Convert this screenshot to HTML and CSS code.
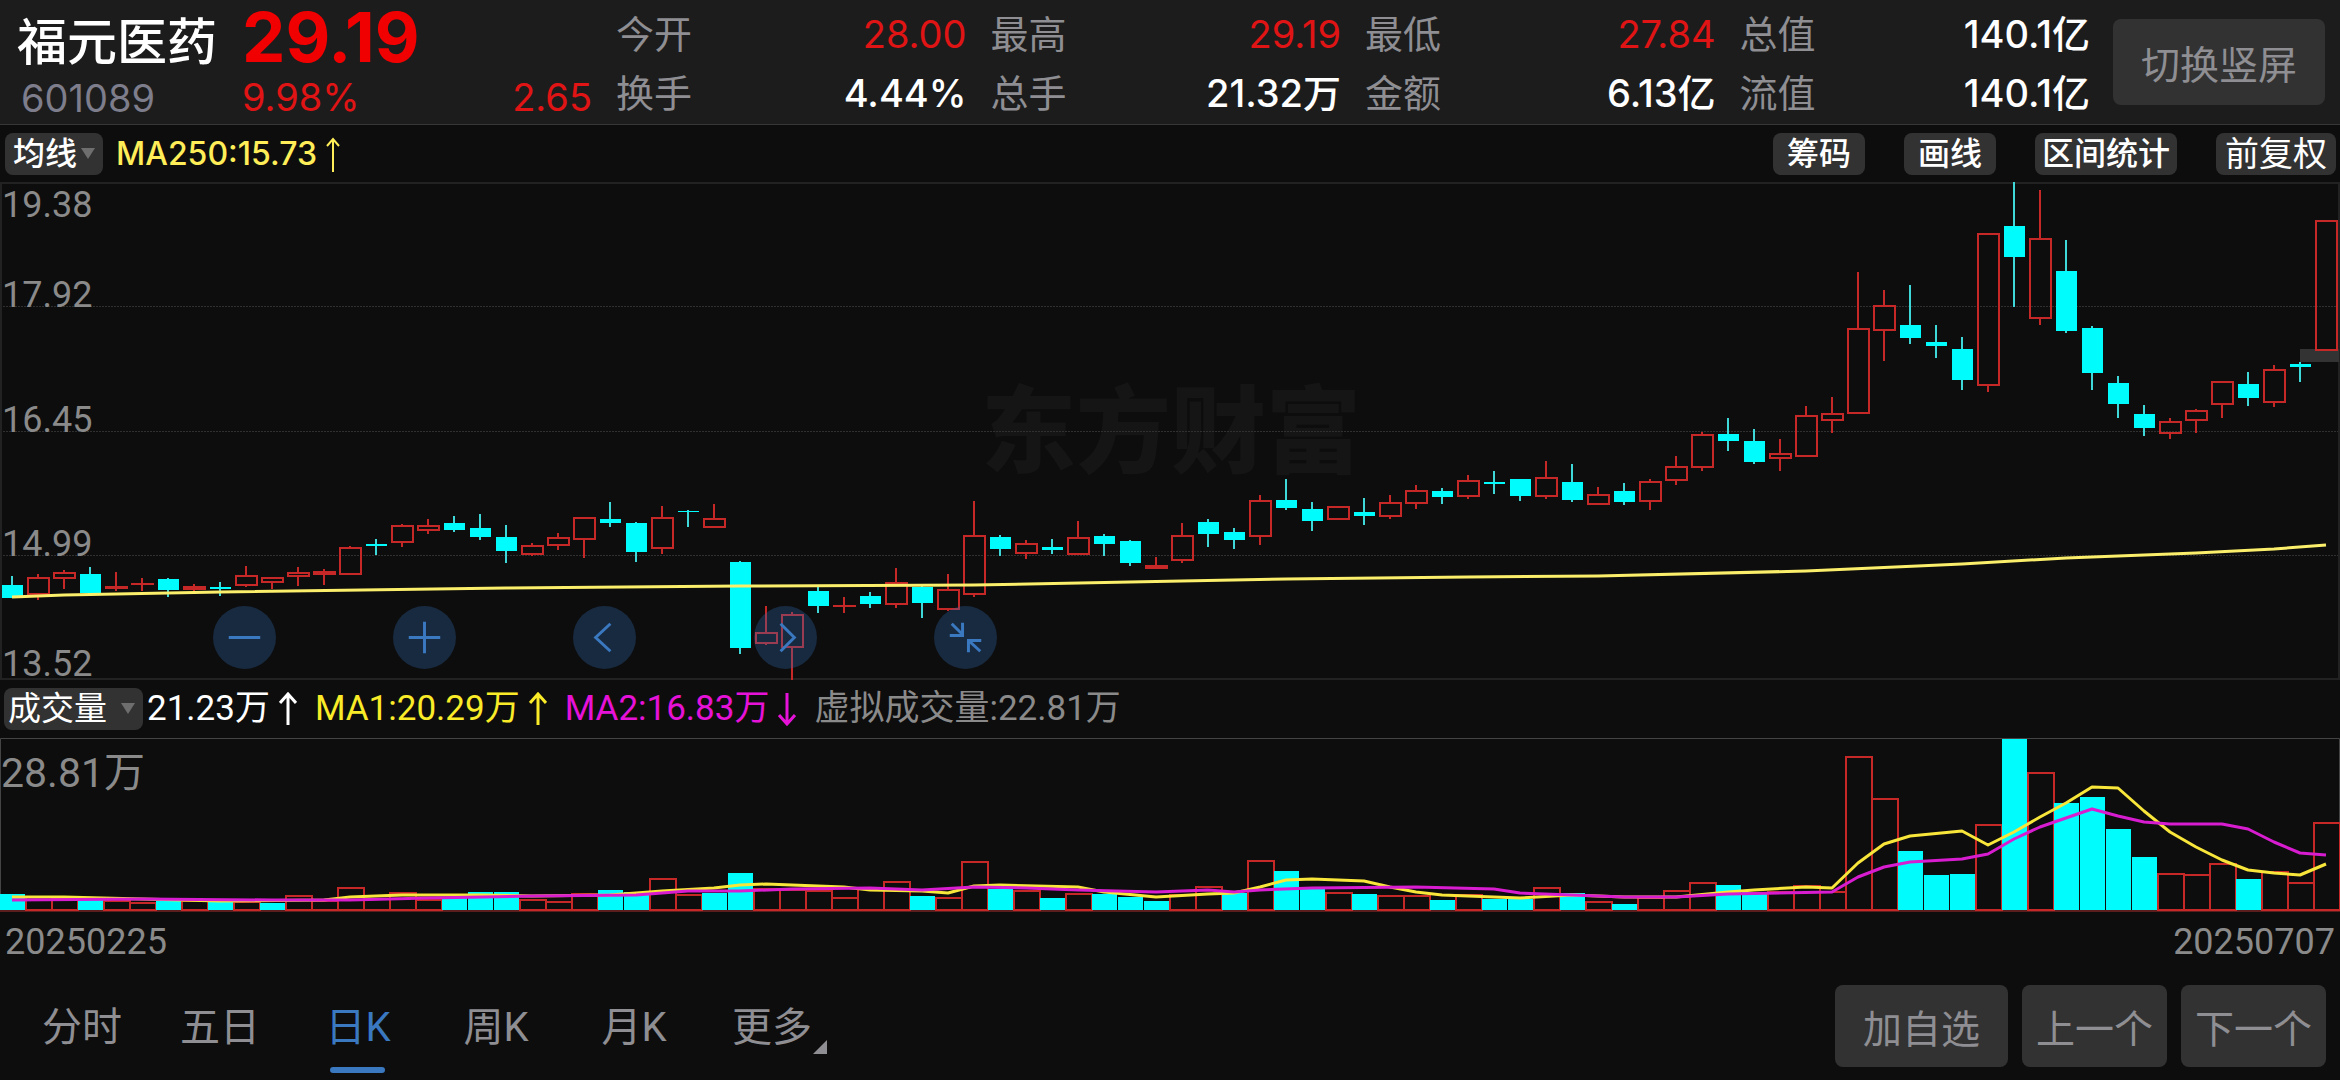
FILE: index.html
```
<!DOCTYPE html>
<html lang="zh-CN">
<head>
<meta charset="utf-8">
<meta name="viewport" content="width=device-width, initial-scale=1">
<title>福元医药 601089 日K</title>
<link rel="stylesheet" href="styles.css">
</head>
<body>
<header class="quote">
  <div class="stock">
    <h1 class="stock-name">福元医药</h1>
    <span class="stock-code">601089</span>
  </div>
  <div class="price">
    <strong class="price-last">29.19</strong>
    <div class="price-change"><span>9.98%</span><span>2.65</span></div>
  </div>
  <dl class="stats">
    <div class="stat"><dt>今开</dt><dd class="up">28.00</dd></div>
    <div class="stat"><dt>最高</dt><dd class="up">29.19</dd></div>
    <div class="stat"><dt>最低</dt><dd class="up">27.84</dd></div>
    <div class="stat"><dt>总值</dt><dd>140.1亿</dd></div>
    <div class="stat"><dt>换手</dt><dd>4.44%</dd></div>
    <div class="stat"><dt>总手</dt><dd>21.32万</dd></div>
    <div class="stat"><dt>金额</dt><dd>6.13亿</dd></div>
    <div class="stat"><dt>流值</dt><dd>140.1亿</dd></div>
  </dl>
  <button class="btn btn-rotate" type="button">切换竖屏</button>
</header>

<main>
  <div class="bar bar-price">
    <button class="chip chip-ma" type="button">均线<span class="caret"></span></button>
    <span class="ma250">MA250:15.73<svg class="arrow-up" viewBox="0 0 16 36" aria-hidden="true"><path d="M8 36V3M2 10L8 3l6 7"/></svg></span>
    <div class="tools">
      <button class="chip" type="button">筹码</button>
      <button class="chip" type="button">画线</button>
      <button class="chip" type="button">区间统计</button>
      <button class="chip chip-adjust" type="button">前复权</button>
    </div>
  </div>

  <section class="chart" aria-label="日K线">
    <svg id="candles" class="plot" viewBox="0 182 2340 498">
      <text class="watermark" x="981" y="466">东方财富</text>
      <path class="grid" d="M0 306.500H2340M0 431.500H2340M0 555.500H2340"/>
      <path class="frame" d="M1 183H2339V679H1z"/>
      <text class="axis" x="2" y="217">19.38</text>
      <text class="axis" x="2" y="307">17.92</text>
      <text class="axis" x="2" y="432">16.45</text>
      <text class="axis" x="2" y="556">14.99</text>
      <text class="axis" x="2" y="676">13.52</text>
      <rect class="gap" x="2300" y="349" width="39" height="13"/>
    </svg>
    <div class="controls">
      <button class="round" type="button" aria-label="缩小"><svg viewBox="0 0 64 64"><path d="M16 32H48"/></svg></button>
      <button class="round" type="button" aria-label="放大"><svg viewBox="0 0 64 64"><path d="M16 32H48M32 16V48"/></svg></button>
      <button class="round" type="button" aria-label="左移"><svg viewBox="0 0 64 64"><path d="M38 18L23 32L38 46"/></svg></button>
      <button class="round" type="button" aria-label="右移"><svg viewBox="0 0 64 64"><path d="M27 18L41 32L27 46"/></svg></button>
      <button class="round" type="button" aria-label="收起"><svg viewBox="0 0 64 64"><path d="M18 18L29 29M29 17V30H16M47 46L35 35M35 47V35H48"/></svg></button>
    </div>
  </section>

  <div class="bar bar-volume">
    <button class="chip chip-volume" type="button">成交量<span class="caret"></span></button>
    <span class="legend">21.23万<svg class="arrow" viewBox="0 0 18 34" aria-hidden="true"><path d="M9 33V2M1 11L9 2l8 9"/></svg></span>
    <span class="legend legend-ma1">MA1:20.29万<svg class="arrow" viewBox="0 0 18 34" aria-hidden="true"><path d="M9 33V2M1 11L9 2l8 9"/></svg></span>
    <span class="legend legend-ma2">MA2:16.83万<svg class="arrow" viewBox="0 0 18 34" aria-hidden="true"><path d="M9 1V32M1 23L9 32l8-9"/></svg></span>
    <span class="legend legend-virtual">虚拟成交量:22.81万</span>
  </div>

  <section aria-label="成交量">
    <svg id="volume" class="plot" viewBox="0 737 2340 175">
      <path class="frame frame-volume" d="M.5 911V737.500H2339.500V911"/>
      <path class="base" d="M0 910H2340"/>
      <text class="axis axis-volume" x="1" y="786">28.81万</text>
    </svg>
    <div class="dates"><time>20250225</time><time>20250707</time></div>
  </section>
</main>

<footer class="footer">
  <nav class="tabs">
    <a class="tab" href="#minute">分时</a>
    <a class="tab" href="#five">五日</a>
    <a class="tab tab-on" href="#day" aria-current="page">日K</a>
    <a class="tab" href="#week">周K</a>
    <a class="tab" href="#month">月K</a>
    <a class="tab tab-more" href="#more">更多</a>
  </nav>
  <div class="actions">
    <button class="btn btn-wide" type="button">加自选</button>
    <button class="btn" type="button">上一个</button>
    <button class="btn" type="button">下一个</button>
  </div>
</footer>
<script src="chart.js"></script>
</body>
</html>
```
FILE: styles.css
```
* { box-sizing: border-box; }

body {
  margin: 0;
  min-height: 100vh;
  display: flex;
  flex-direction: column;
  background: #0d0d0d;
  color: #fff;
  font-family: Roboto, "Noto Sans CJK SC", sans-serif;
  font-size: 36px;
}

button {
  border: 0;
  padding: 0;
  color: inherit;
  font-family: inherit;
  white-space: nowrap;
}

a { color: inherit; text-decoration: none; }

/* quote header */
.quote {
  display: flex;
  align-items: flex-start;
  min-height: 125px;
  background: #1c1c1c;
  border-bottom: 1px solid #363636;
  font-family: Inter, "Noto Sans CJK SC", sans-serif;
  font-size: 38px;
}
.stock {
  flex: 0 0 242px;
  padding: 12px 0 0 17px;
}
.stock-name {
  margin: 0;
  font-size: 50px;
  font-weight: 500;
  line-height: 60px;
}
.stock-code {
  display: block;
  padding-left: 4px;
  color: #7d7d8c;
  line-height: 52px;
}
.price {
  flex: 0 0 350px;
  color: #e01414;
}
.price-last {
  display: block;
  color: #f00000;
  font-size: 69px;
  font-weight: 700;
  line-height: 74px;
}
.price-change {
  display: flex;
  justify-content: space-between;
  line-height: 46px;
}
.stats {
  flex: 1;
  display: grid;
  grid-template-columns: repeat(4, 1fr);
  gap: 0 24px;
  margin: 5px 23px 0 24px;
  line-height: 59px;
}
.stat { display: flex; justify-content: space-between; }
.stat dt { color: #8e8e93; }
.stat dd { margin: 0; font-weight: 500; }
.stat .up { color: #e01414; font-weight: 400; }

.btn {
  min-width: 145px;
  height: 82px;
  border-radius: 8px;
  background: #323232;
  color: #8e8e93;
  font-size: 39px;
}
.btn-wide { min-width: 173px; }
.btn-rotate {
  flex: 0 0 212px;
  height: 86px;
  margin: 19px 15px 0 0;
}

/* indicator bars */
.bar { display: flex; align-items: center; }
.bar-price { height: 57px; padding: 0 4px 0 5px; }
.chip {
  height: 42px;
  padding: 0 14px;
  border-radius: 8px;
  background: #323232;
  font-size: 32px;
  font-weight: 500;
  line-height: 42px;
}
.caret {
  display: inline-block;
  border: 7px solid transparent;
  border-top: 11px solid #6e6e6e;
  border-bottom: 0;
  vertical-align: 6px;
}
.chip-ma { width: 98px; padding: 0 0 0 8px; text-align: left; }
.chip-ma .caret { margin-left: 4px; }
.ma250 {
  display: flex;
  align-items: center;
  margin-left: 13px;
  color: #ffee58;
  font-family: Inter, sans-serif;
  font-size: 32px;
  font-weight: 500;
}
.arrow-up, .arrow { fill: none; stroke: currentColor; }
.arrow-up { width: 16px; height: 36px; margin-left: 8px; stroke-width: 2; }
.tools { display: flex; gap: 39px; margin-left: auto; }
.tools .chip:nth-child(3) { padding: 0 7px; }
.tools .chip-adjust { padding: 0 9px; font-size: 34px; font-weight: 400; }

.bar-volume { height: 58px; padding-left: 4px; gap: 18px; }
.chip-volume {
  width: 139px;
  margin-right: -14px;
  padding: 0 0 0 4px;
  font-size: 33px;
  font-weight: 400;
  text-align: left;
}
.chip-volume .caret { margin-left: 14px; }
.legend {
  display: flex;
  align-items: center;
  font-size: 35px;
  line-height: 38px;
}
.arrow { width: 18px; height: 34px; margin-left: 9px; stroke-width: 3; }
.legend-ma1 { color: #faeb28; }
.legend-ma2 { color: #e612d8; }
.legend-virtual { color: #8a8a8a; }

/* charts */
.chart { position: relative; }
.plot { display: block; width: 100%; height: auto; overflow: visible; }
.frame { fill: none; stroke: #222; stroke-width: 2; }
.frame-volume { stroke: #444; stroke-width: 1; }
.base { stroke: #5c1d1d; stroke-width: 2; }
.grid { stroke: #303030; stroke-width: 1; stroke-dasharray: 2 1; }
.axis { fill: #8a8a8a; font-size: 36px; }
.axis-volume { font-size: 41px; }
.watermark {
  fill: #151515;
  font-family: "Noto Sans CJK SC", sans-serif;
  font-size: 95px;
  font-weight: 900;
}
.gap { fill: #333; }
.rise { fill: none; stroke: #c62828; stroke-width: 2; }
.rise-solid { fill: #c62828; }
.fall { fill: #00fcfc; }
.fall-wick { stroke: #3ed8d8; stroke-width: 2; }
.line { fill: none; stroke-width: 3; stroke-linejoin: round; }
.line-250 { stroke: #fbee6a; }
.line-ma1 { stroke: #f8e63a; }
.line-ma2 { stroke: #d81cd0; }

.controls {
  position: absolute;
  left: 9.1%;
  bottom: 11px;
  width: 33.500%;
  display: flex;
  justify-content: space-between;
}
.round {
  width: 63px;
  height: 63px;
  border-radius: 50%;
  background: rgba(50, 110, 183, .3);
}
.round svg {
  display: block;
  width: 100%;
  fill: none;
  stroke: #3a78c0;
  stroke-width: 3;
}

.dates {
  display: flex;
  justify-content: space-between;
  padding: 8px 5px 0;
  color: #8a8a8a;
  line-height: 42px;
}

/* period tabs and actions */
.footer {
  display: flex;
  align-items: flex-start;
  justify-content: space-between;
  margin-top: 22px;
  padding: 0 14px 0 13px;
}
.tabs { display: flex; color: #8e8e93; font-size: 40px; }
.tab {
  position: relative;
  width: 138px;
  height: 88px;
  line-height: 86px;
  text-align: center;
}
.tab-on { color: #3a78c0; }
.tab-on::after {
  content: "";
  position: absolute;
  left: 41px;
  bottom: 0;
  width: 55px;
  height: 6px;
  border-radius: 3px;
  background: #3a78c0;
}
.tab-more::after {
  content: "";
  position: absolute;
  right: 14px;
  bottom: 19px;
  border: 7px solid #8e8e93;
  border-top-color: transparent;
  border-left-color: transparent;
}
.actions { display: flex; gap: 14px; }
```
FILE: chart.js
```
const STEP = 26;
const FIRST = 12;
const centre = i => FIRST + STEP * i;

// r = rise, f = fall; then high, body top, body bottom, low
const candles = `f576,585,598,598 r574,577,595,600 r570,572,579,589 f567,574,593,594 r572,586,589,591
r578,583,585,591 f578,579,590,597 r584,586,590,594 f582,587,589,596 r566,575,586,587
r577,577,583,589 r567,572,577,586 r569,571,575,585 r546,547,575,575 f539,544,546,555
r524,525,543,547 r519,525,531,534 f516,523,530,532 f514,528,537,540 f525,537,551,563
r543,545,555,556 r533,537,546,550 r517,517,540,558 f502,519,523,527 f522,523,552,562
r506,517,549,554 f510,511,512,527 r504,518,528,528 f561,562,648,654 r606,632,644,645
r612,614,648,680 f586,591,606,613 r597,605,607,613 f592,596,604,608 r568,582,605,608
f586,587,603,618 r574,589,610,611 r501,535,595,597 f535,537,549,556 r540,543,554,559
f539,547,550,554 r521,537,555,555 f534,536,544,556 f540,541,563,566 r557,565,569,569
r523,535,561,563 f519,522,534,547 f528,532,540,549 r495,500,537,545 f479,500,508,510
f502,509,521,531 r506,506,520,520 f498,512,516,525 r495,502,517,519 r485,490,504,509
f488,491,497,504 r475,480,497,499 f471,482,484,494 f479,479,496,501 r461,477,497,499
f464,482,500,502 r487,494,505,505 f483,491,502,505 r479,481,502,510 r456,466,481,485
r432,434,468,471 f418,434,441,451 f429,441,462,464 r439,453,459,471 r406,415,457,457
r397,413,421,433 r272,328,414,414 r290,305,331,361 f285,325,338,344 f325,342,346,358
f337,349,380,390 r233,233,386,392 f182,226,257,307 r190,238,319,325 f240,271,331,333
f326,328,373,390 f376,383,404,418 f405,414,428,436 r418,421,434,439 r409,410,421,433
r381,381,405,418 f372,384,398,406 r365,369,403,407 f362,364,367,382 r220,220,351,351`;

const volumes = `f893 r895 r897 f899 r899 r901 f900 r899 f900 r900 f902 r894 r899 r886 r897 r891 r898
f897 f891 f891 r898 r900 r892 f889 f891 r877 r893 f892 f872 r887 r888 r889 r896 r887 r880 f895 r896
r860 f888 r889 f897 r892 f893 f896 f900 r893 r885 f892 r859 f870 f887 r891 f893 r894 r894 f899 r893
f898 f898 r886 f892 r900 f903 r896 r889 r881 f884 f891 r890 r884 r890 r755 r797 f850 f874 f873 r823
f738 r771 f802 f796 f828 f856 r872 r873 r862 f878 r870 r881 r821`;

// candle index : y
const ma1 = `0:896 2:896 5:898 8:900 12:899 13:896 15:894 18:894 20:895 23:894 25:890 27:887 28:884
29:883 31:885 32:886 33:889 35:890 36:892 37:885 38:884 41:886 42:891 44:896 46:893 47:892 48:886
49:879 50:878 52:880 53:886 54:891 55:894 58:897 60:894 62:896 64:896 66:891 67:889 69:886 70:887
71:862 72:843 73:835 75:830 76:844 77:831 78:816 79:802 80:786 81:787 82:810 83:831 84:846 85:859
86:869 87:872 88:874 89:863`;
const ma2 = `0:899 5:898 10:899 13:899 16:897 20:895 24:894 26:890 28:890 30:888 33:887 35:889 37:886
39:887 41:889 44:891 46:889 47:891 48:889 50:887 54:886 57:888 58:892 60:894 62:896 64:896 66:893
70:891 71:876 72:866 73:861 75:858 76:853 77:838 78:826 79:817 80:808 81:815 82:821 83:823 85:823
86:828 87:841 88:852 89:854`;
const ma250 = `0:597 2:595 8:592 19:588 28:586 37:585 43:582 49:579 56:577 61:576 69:571 75:564
79:558 84:553 87:549 89:545`;

const words = s => s.trim().split(/\s+/);

function draw(svg, name, cls, attrs) {
  const el = document.createElementNS('http://www.w3.org/2000/svg', name);
  el.setAttribute('class', cls);
  for (const key in attrs) el.setAttribute(key, attrs[key]);
  svg.append(el);
}

function drawLine(svg, cls, data) {
  const points = words(data).map(p => {
    const [i, y] = p.split(':');
    return centre(Number(i)) + ',' + y;
  }).join(' ');
  draw(svg, 'polyline', 'line ' + cls, { points });
}

const priceSvg = document.getElementById('candles');
words(candles).forEach((item, i) => {
  const [high, top, bottom, low] = item.slice(1).split(',').map(Number);
  const x = centre(i);
  if (item[0] === 'f') {
    draw(priceSvg, 'path', 'fall-wick', { d: `M${x} ${high}V${low}` });
    draw(priceSvg, 'rect', 'fall', { x: x - 10, y: top, width: 21, height: bottom - top });
  } else {
    draw(priceSvg, 'path', 'rise', { d: `M${x} ${high}V${top}M${x} ${bottom}V${low}` });
    if (bottom - top < 5) {
      draw(priceSvg, 'rect', 'rise-solid', { x: x - 11, y: top, width: 23, height: bottom - top });
    } else {
      draw(priceSvg, 'rect', 'rise', { x: x - 10, y: top + 1, width: 21, height: bottom - top - 2 });
    }
  }
});
drawLine(priceSvg, 'line-250', ma250);

const volumeSvg = document.getElementById('volume');
words(volumes).forEach((item, i) => {
  const top = Number(item.slice(1));
  const x = centre(i);
  if (item[0] === 'f') {
    draw(volumeSvg, 'rect', 'fall', { x: x - 12, y: top, width: 25, height: 909 - top });
  } else {
    draw(volumeSvg, 'rect', 'rise', { x: x - 12, y: top + 1, width: 26, height: 908 - top });
  }
});
drawLine(volumeSvg, 'line-ma1', ma1);
drawLine(volumeSvg, 'line-ma2', ma2);
```
